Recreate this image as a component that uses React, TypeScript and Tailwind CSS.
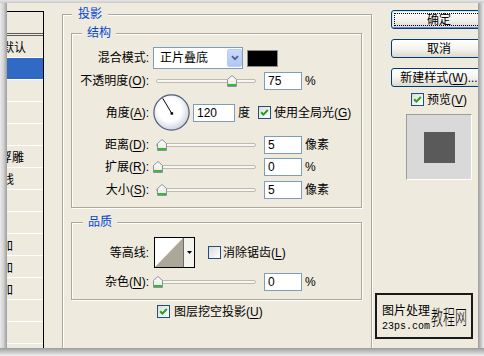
import React from "react";

function U({ children }: { children: React.ReactNode }) {
  return <span className="underline underline-offset-[2px]">{children}</span>;
}

function CheckBox({ checked }: { checked?: boolean }) {
  return (
    <span className="flex w-[13px] h-[13px] shrink-0 border border-[#1C5180] bg-linear-to-br from-[#DCDCD7] to-white">
      {checked && (
        <svg width="11" height="11" viewBox="0 0 11 11">
          <path d="M2.2 5.2 L4.4 7.6 L8.8 3" fill="none" stroke="#21A121" strokeWidth="2" />
        </svg>
      )}
    </span>
  );
}

function Label({ children }: { children: React.ReactNode }) {
  return <div className="w-[77px] shrink-0 text-right whitespace-nowrap">{children}</div>;
}

function Field({ value, w = "w-[38px]" }: { value: string; w?: string }) {
  return (
    <div className={`${w} h-[18px] shrink-0 border border-[#7F9DB9] bg-white pl-[3px] leading-[16px]`}>
      {value}
    </div>
  );
}

function Slider({ pos }: { pos: number }) {
  return (
    <div className="relative flex items-center w-[106px] h-[14px] shrink-0">
      <div className="ml-[4px] w-[100px] h-[4px] rounded-[2px] border border-[#BDBAAE] bg-[#F7F6F2]" />
      <svg className="absolute top-[1px]" style={{ left: pos }} width="10" height="12" viewBox="0 0 10 12">
        <defs>
          <linearGradient id="thumb" x1="0" y1="0" x2="0" y2="1">
            <stop offset="0" stopColor="#FFFFFF" />
            <stop offset="1" stopColor="#E4E6DC" />
          </linearGradient>
        </defs>
        <path d="M0.5 4.5 L5 0.5 L9.5 4.5 V11.5 H0.5 Z" fill="url(#thumb)" stroke="#8A939E" strokeWidth="1" />
        <rect x="1" y="9" width="8" height="2" fill="#3AB43A" />
      </svg>
    </div>
  );
}

function SliderRow({
  label,
  pos,
  value,
  unit,
  mt,
}: {
  label: React.ReactNode;
  pos: number;
  value: string;
  unit: string;
  mt: string;
}) {
  return (
    <div className={`${mt} h-[18px] flex items-center`}>
      <Label>{label}</Label>
      <div className="ml-[3px]">
        <Slider pos={pos} />
      </div>
      <div className="ml-[6px]">
        <Field value={value} />
      </div>
      <span className="ml-[3px] whitespace-nowrap">{unit}</span>
    </div>
  );
}

function Group({
  title,
  titleLeft,
  className,
  children,
}: {
  title: string;
  titleLeft: string;
  className: string;
  children?: React.ReactNode;
}) {
  return (
    <div
      className={`relative shrink-0 border border-[#ACA899] shadow-[inset_1px_1px_0_#fff,1px_1px_0_#fff] ${className}`}
    >
      <span className={`absolute -top-[8px] ${titleLeft} bg-[#EEEADE] text-[#0046D5] leading-[14px]`}>
        {title}
      </span>
      {children}
    </div>
  );
}

function Btn({ children, def }: { children: React.ReactNode; def?: boolean }) {
  return (
    <div
      className={
        "w-[96px] h-[19px] shrink-0 rounded-[3px] border border-[#003C74] bg-linear-to-b from-white via-[#F5F4EF] to-[#DDD9CD] flex items-center justify-center whitespace-nowrap leading-[14px] " +
        (def
          ? "outline-1 outline-dotted outline-black -outline-offset-4 shadow-[inset_1px_1px_0_#CEE7FF,inset_-1px_-1px_0_#6982EE]"
          : "")
      }
    >
      {children}
    </div>
  );
}

// the list is scrolled off to the left; only the tails of a few names show
const listRows: { text: string; pr: string; sel?: boolean }[] = [
  { text: "默认", pr: "pr-[17px]" },
  { text: "", pr: "", sel: true },
  { text: "", pr: "" },
  { text: "", pr: "" },
  { text: "", pr: "" },
  { text: "浮雕", pr: "pr-[19px]" },
  { text: "线", pr: "pr-[29px]" },
  { text: "", pr: "" },
  { text: "", pr: "" },
  { text: "加", pr: "pr-[30px]" },
  { text: "加", pr: "pr-[30px]" },
  { text: "加", pr: "pr-[30px]" },
  { text: "", pr: "" },
  { text: "", pr: "" },
];

export default function App() {
  return (
    <div className="w-[484px] h-[356px] flex flex-col overflow-hidden text-[12px] leading-[14px] text-black font-['Liberation_Sans','Noto_Sans_CJK_SC',sans-serif]">
      <div className="h-[3px] shrink-0 bg-linear-to-b from-[#E6E6E6] to-[#C9C9C9]" />
      <div className="flex flex-1 min-h-0">
        <div className="w-[7px] shrink-0 bg-linear-to-r from-[#EAEAEA] via-[#D2D2D2] to-[#9C9C9C]" />
        <div className="relative flex items-start flex-1 min-w-0 overflow-hidden bg-[#EEEADE]">
          {/* layer style list */}
          <div className="mt-[8px] w-[37px] h-[345px] shrink-0 border-t border-r border-black overflow-hidden">
            <div className="h-[22px] border-b border-[#5A5A5A]" />
            <div className="h-[2px] border-b border-[#5A5A5A]" />
            {listRows.map((r, i) => (
              <div
                key={i}
                className={`h-[22px] flex items-center justify-end overflow-hidden whitespace-nowrap border-b border-white ${r.pr} ${
                  r.sel ? "bg-[#316AC5] text-white" : ""
                }`}
              >
                <span className="shrink-0 pt-[2px]">{r.text}</span>
              </div>
            ))}
          </div>

          {/* drop shadow group */}
          <Group title="投影" titleLeft="left-[9px] px-[6px]" className="ml-[18px] mt-[11px] w-[310px] h-[360px] flex flex-col">
            <Group title="结构" titleLeft="left-[10px] px-[5px]" className="ml-[8px] mt-[18px] w-[291px] h-[175px] flex flex-col">
              <div className="mt-[13px] h-[22px] flex items-center">
                <Label>混合模式:</Label>
                <div className="ml-[4px] w-[90px] h-[22px] shrink-0 border border-[#7F9DB9] bg-white flex items-center">
                  <span className="flex-1 pl-[6px] whitespace-nowrap">正片叠底</span>
                  <div className="w-[15px] h-[18px] rounded-[2px] border border-[#B9CCF6] bg-linear-to-b from-[#CBDAFC] to-[#AFC6F5] flex items-center justify-center">
                    <svg width="8" height="6" viewBox="0 0 8 6">
                      <path d="M1 1.2 L4 4.2 L7 1.2" fill="none" stroke="#4D6185" strokeWidth="1.8" />
                    </svg>
                  </div>
                </div>
                <div className="ml-[4px] w-[31px] h-[17px] shrink-0 bg-black border border-[#8A8A8A]" />
              </div>
              <SliderRow
                mt="mt-[3px]"
                label={<>不透明度(<U>O</U>):</>}
                pos={75}
                value="75"
                unit="%"
              />
              <div className="mt-[4px] h-[37px] flex items-center">
                <Label>角度(<U>A</U>):</Label>
                <svg className="ml-[4px] shrink-0" width="37" height="37" viewBox="0 0 37 37">
                  <defs>
                    <radialGradient id="dial" cx="45%" cy="42%" r="60%">
                      <stop offset="0.55" stopColor="#FFFFFF" />
                      <stop offset="1" stopColor="#C9CFDC" />
                    </radialGradient>
                  </defs>
                  <circle cx="18.5" cy="18.5" r="17.6" fill="url(#dial)" stroke="#4E5D7A" strokeWidth="1.2" />
                  <line x1="18.7" y1="19.3" x2="9.7" y2="4.3" stroke="#000" strokeWidth="1" />
                  <rect x="17.6" y="18.2" width="2.5" height="2.5" fill="#000" />
                </svg>
                <div className="ml-[3px]">
                  <Field value="120" w="w-[42px]" />
                </div>
                <span className="ml-[3px]">度</span>
                <div className="ml-[8px]">
                  <CheckBox checked />
                </div>
                <span className="ml-[3px] whitespace-nowrap">
                  使用全局光(<U>G</U>)
                </span>
              </div>
              <SliderRow mt="mt-[5px]" label={<>距离(<U>D</U>):</>} pos={5} value="5" unit="像素" />
              <SliderRow mt="mt-[4px]" label={<>扩展(<U>R</U>):</>} pos={1} value="0" unit="%" />
              <SliderRow mt="mt-[5px]" label={<>大小(<U>S</U>):</>} pos={5} value="5" unit="像素" />
            </Group>

            <Group title="品质" titleLeft="left-[11px] px-[5px]" className="ml-[8px] mt-[14px] w-[291px] h-[78px] flex flex-col">
              <div className="mt-[14px] h-[31px] flex items-center">
                <Label>等高线:</Label>
                <div className="ml-[5px] w-[41px] h-[31px] shrink-0 border border-black bg-white flex">
                  <svg width="28" height="29" viewBox="0 0 28 29">
                    <polygon points="0,29 28,0 28,29" fill="#ACA899" />
                  </svg>
                  <div className="w-[11px] border-l border-[#6E6E6E] bg-[#F4F3EE] flex items-center justify-center">
                    <svg width="5" height="3" viewBox="0 0 5 3">
                      <polygon points="0,0 5,0 2.5,3" fill="#000" />
                    </svg>
                  </div>
                </div>
                <div className="ml-[13px]">
                  <CheckBox />
                </div>
                <span className="ml-[2px] whitespace-nowrap">
                  消除锯齿(<U>L</U>)
                </span>
              </div>
              <SliderRow mt="mt-[5px]" label={<>杂色(<U>N</U>):</>} pos={1} value="0" unit="%" />
            </Group>

            <div className="mt-[5px] ml-[94px] h-[13px] flex items-center">
              <CheckBox checked />
              <span className="ml-[4px] whitespace-nowrap">
                图层挖空投影(<U>U</U>)
              </span>
            </div>
          </Group>

          {/* buttons */}
          <div className="ml-[19px] mt-[7px] w-[96px] shrink-0 flex flex-col items-center">
            <Btn def>确定</Btn>
            <div className="mt-[10px]">
              <Btn>取消</Btn>
            </div>
            <div className="mt-[10px]">
              <Btn>
                新建样式(<U>W</U>)...
              </Btn>
            </div>
            <div className="mt-[6px] h-[13px] flex items-center">
              <CheckBox checked />
              <span className="ml-[3px] whitespace-nowrap">
                预览(<U>V</U>)
              </span>
            </div>
            <div className="mt-[8px] w-[66px] h-[66px] border-t border-l border-[#9E9C93] border-r border-b border-r-white border-b-white bg-[#D9D9D9] flex items-center justify-center">
              <div className="w-[31px] h-[31px] bg-[#5A5A5A]" />
            </div>
          </div>

          {/* watermark */}
          <div className="absolute left-[368px] top-[290px] w-[98px] h-[46px] border-2 border-[#1A1A1A] bg-[#EEEADE] flex items-end pl-[5px] pb-[5px]">
            <div className="flex flex-col">
              <span className="leading-[14px] whitespace-nowrap">图片处理</span>
              <span className="mt-[3px] text-[10px] leading-[11px] font-['Liberation_Mono',monospace]">23ps.com</span>
            </div>
            <span className="ml-[1px] mb-[4px] text-[12px] leading-[12px] font-light whitespace-nowrap origin-bottom scale-y-170">
              教程网
            </span>
          </div>
        </div>
        <div className="w-[6px] shrink-0 bg-linear-to-r from-[#9C9C9C] to-[#EFEFEF]" />
      </div>
      <div className="h-[8px] shrink-0 bg-linear-to-b from-[#9C9C9C] to-[#F2F2F2]" />
    </div>
  );
}
